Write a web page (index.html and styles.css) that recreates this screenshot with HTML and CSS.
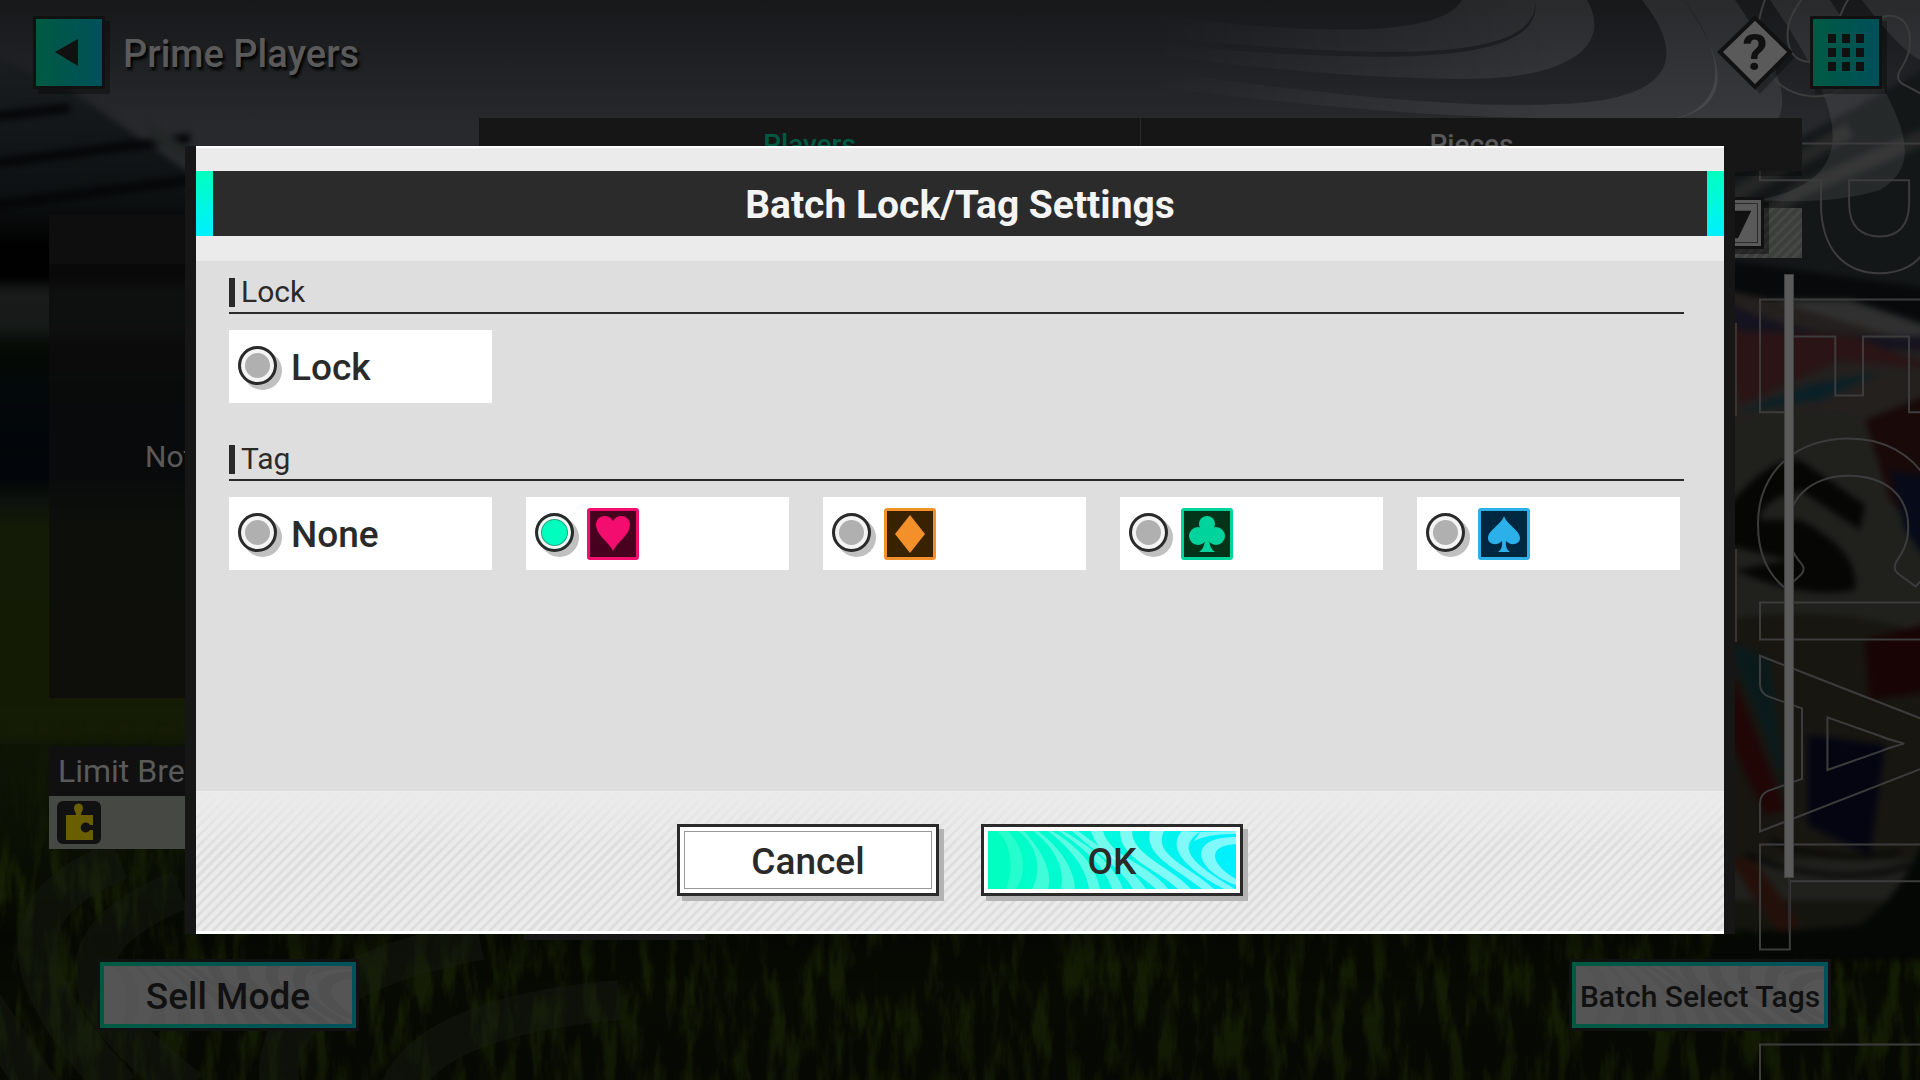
FILE: index.html
```html
<!DOCTYPE html>
<html lang="en">
<head>
<meta charset="UTF-8" />
<meta name="viewport" content="width=device-width, initial-scale=1" />
<title>Batch Lock/Tag Settings</title>
<link rel="stylesheet" href="styles.css">
</head>
<body>

<!-- stadium backdrop -->
<svg class="backdrop" viewBox="0 0 1920 1080" preserveAspectRatio="xMidYMid slice" aria-hidden="true">
  <defs>
    <linearGradient id="sky" x1="0" y1="0" x2="0" y2="1">
      <stop offset="0" stop-color="#16181a" />
      <stop offset="0.35" stop-color="#27292c" />
      <stop offset="0.75" stop-color="#2a2e30" />
      <stop offset="1" stop-color="#171b1b" />
    </linearGradient>
    <linearGradient id="stand" x1="0" y1="0" x2="0" y2="1">
      <stop offset="0" stop-color="#1a1e20" />
      <stop offset="0.22" stop-color="#0c1011" />
      <stop offset="0.28" stop-color="#010101" />
      <stop offset="0.33" stop-color="#010101" />
      <stop offset="0.35" stop-color="#181b1a" />
      <stop offset="0.4" stop-color="#161a18" />
      <stop offset="0.43" stop-color="#050a04" />
      <stop offset="0.5" stop-color="#03080b" />
      <stop offset="0.62" stop-color="#020509" />
      <stop offset="0.65" stop-color="#0b110c" />
      <stop offset="0.69" stop-color="#131a06" />
      <stop offset="1" stop-color="#151c05" />
    </linearGradient>
    <linearGradient id="pitch" x1="0" y1="0" x2="0" y2="1">
      <stop offset="0" stop-color="#0b0f08" />
      <stop offset="0.3" stop-color="#151c05" />
      <stop offset="0.6" stop-color="#0d1405" />
      <stop offset="0.78" stop-color="#070b03" />
      <stop offset="1" stop-color="#060903" />
    </linearGradient>
    <linearGradient id="swirlFade" gradientUnits="userSpaceOnUse" x1="1150" y1="0" x2="1550" y2="0">
      <stop offset="0" stop-color="#fff" stop-opacity="0" />
      <stop offset="1" stop-color="#fff" stop-opacity="0.08" />
    </linearGradient>
    <linearGradient id="grassFade" x1="0" y1="0" x2="0" y2="1">
      <stop offset="0" stop-color="#000" />
      <stop offset="0.5" stop-color="#fff" />
      <stop offset="1" stop-color="#aaa" />
    </linearGradient>
    <mask id="grassMask"><rect y="720" width="1920" height="360" fill="url(#grassFade)" /></mask>
    <filter id="grass" x="0" y="0" width="100%" height="100%" color-interpolation-filters="sRGB">
      <feTurbulence type="fractalNoise" baseFrequency="0.06 0.014" numOctaves="5" seed="7" />
      <feColorMatrix values="0 0 0 0 0.09  0 0 0 0 0.13  0 0 0 0 0.02  4 0 0 0 -1.8" />
    </filter>
    <filter id="soft" color-interpolation-filters="sRGB"><feGaussianBlur stdDeviation="3" /></filter>
    <filter id="softer" x="-20%" y="-100%" width="140%" height="300%" color-interpolation-filters="sRGB"><feGaussianBlur stdDeviation="12" /></filter>
  </defs>

  <rect width="1920" height="360" fill="url(#sky)" />
  <rect y="310" width="1920" height="770" fill="url(#pitch)" />
  <g filter="url(#soft)">
    <path d="M-20 50L70 90L200 180L260 240V740H-20Z" fill="url(#stand)" />
    <path d="M-20 118L70 108M-20 165L190 138M-20 207L190 180" stroke="#040607" stroke-width="9" />
    <path d="M145 120L190 148L185 160L150 140Z" fill="#232726" />
  </g>
  <g mask="url(#grassMask)">
    <rect y="720" width="1920" height="360" filter="url(#grass)" />
  </g>
  <rect x="-40" y="925" width="2000" height="30" fill="#030401" opacity="0.4" filter="url(#softer)" />

  <!-- ball and stand on the right -->
  <g filter="url(#soft)">
    <rect x="1725" y="170" width="230" height="760" fill="#15150f" />
    <path d="M1725 180L1940 60V300L1725 260Z" fill="#131718" />
    <path d="M1725 250L1800 190L1940 130M1725 200L1850 130" stroke="#252625" stroke-width="16" fill="none" />
    <path d="M1725 260L1940 290V330L1725 290Z" fill="#07090a" />
    <path d="M1725 290L1940 340V520H1725Z" fill="#23201e" />
    <path d="M1770 300L1940 350V330L1850 300Z" fill="#303030" />
    <path d="M1725 300Q1800 345 1940 335V350Q1820 350 1725 335Z" fill="#14131f" />
    <path d="M1725 330L1850 335L1940 370L1840 360L1740 405Z" fill="#2a1415" />
    <path d="M1738 412L1810 385L1880 372L1820 400Z" fill="#0a2027" />
    <path d="M1725 425Q1800 400 1860 420L1930 560V900H1725Z" fill="#20211d" />
    <path d="M1865 420L1940 390V560L1890 500Z" fill="#190909" />
    <path d="M1725 510Q1770 455 1800 460L1865 505L1860 530L1800 490Q1760 500 1760 520L1800 520Q1860 550 1855 590Q1800 600 1735 570L1790 560L1725 545Z" fill="#060705" />
    <path d="M1890 470L1940 480V580L1905 530Z" fill="#070a18" />
    <path d="M1725 620Q1840 600 1940 640V860H1725Z" fill="#171611" />
    <path d="M1735 680L1785 810L1765 815L1725 730Z" fill="#210606" />
    <path d="M1725 640L1770 660L1785 790L1760 720Z" fill="#0a1a1b" />
    <path d="M1865 640L1940 620V690L1870 700Z" fill="#180405" />
    <path d="M1808 735L1885 745L1870 855L1808 825Z" fill="#050512" />
    <path d="M1725 855L1755 860L1800 925L1780 935Z" fill="#24100a" />
    <path d="M1745 855Q1840 890 1910 865M1770 840Q1830 865 1900 852" stroke="#050605" stroke-width="4" fill="none" />
    <path d="M1860 925Q1910 890 1940 800V960H1700L1740 935Z" fill="#050704" />
  </g>

  <g fill="url(#swirlFade)">
    <path d="M1150 14C1300 34 1440 40 1462 0H1535C1540 60 1400 62 1150 36Z" />
    <path d="M1150 44C1400 66 1545 64 1535 0H1587C1615 50 1560 80 1460 79C1340 78 1240 66 1150 54Z" />
    <path d="M1150 70C1360 100 1480 108 1560 104C1670 100 1690 60 1642 0H1684C1740 80 1720 110 1670 120L1540 118C1400 116 1260 100 1150 86Z" />
    <path d="M1684 0H1735C1790 80 1790 110 1770 130L1720 140L1670 120C1725 108 1730 60 1684 0Z" />
    <path d="M1770 0H1830C1900 110 1930 160 1880 190Q1830 205 1760 200C1850 180 1860 130 1770 0Z" />
    <path d="M1862 0H1920V60Q1900 50 1862 0Z" />
  </g>
  <g fill="none" stroke="#1a2016" stroke-width="40" opacity="0.35">
    <path d="M120 860C20 900 0 960 120 1090" />
    <path d="M180 890C60 940 70 1000 190 1090" />
    <path d="M-20 1000L40 1090" />
    <path d="M280 1090C270 1020 330 970 480 940" />
    <path d="M400 1090C420 1040 500 1010 620 1000" />
  </g>

  <text class="side-word" transform="translate(1760 0) rotate(90)" x="-30 125 281 430 584 658 826 970 1026">SPECIAL P</text>

  <symbol id="waves" viewBox="0 0 248 58" preserveAspectRatio="none">
    <path opacity="0.3" d="M9 0C24 14 26 38 18 58H28C40 40 36 16 20 0Z" />
    <path opacity="0.5" d="M30 0C50 14 54 40 44 58H60C66 38 50 16 36 0Z" />
    <path opacity="0.6" d="M45 0C64 14 78 36 73 58H87C86 34 68 14 50 0Z" />
    <path opacity="0.7" d="M60 0C78 14 98 34 101 58H112C108 34 88 14 64 0Z" />
    <path opacity="0.75" d="M71 0C96 18 116 34 124 58H135C128 36 104 16 75 0Z" />
    <path opacity="0.8" d="M84 0C106 20 132 36 145 58H158C142 34 114 18 90 0Z" />
    <path opacity="0.9" d="M103 0C110 26 142 34 168 58H180C160 32 122 26 115 0Z" />
    <path d="M132 0C132 28 166 36 190 58H203C180 34 144 24 144 0Z" />
    <path d="M162 0C156 24 186 36 214 58H226C200 34 164 24 176 0Z" />
    <path d="M194 0C176 20 206 42 236 58H247C218 40 182 20 212 1Z" />
    <path d="M248 6C196 6 208 40 248 54V48C220 32 220 14 248 13Z" />
    <path d="M212 1L248 0V3Q222 2 206 10Z" />
  </symbol>
</svg>

<div class="screen">
  <header class="topbar">
    <button class="icon-btn" aria-label="Back">
      <svg viewBox="0 0 72 73"><path d="M22 36L45 23V50Z" /></svg>
    </button>
    <h1>Prime Players</h1>
    <button class="help-btn" aria-label="Help">
      <svg viewBox="0 0 74 73">
        <path class="help-shadow" d="M42 9L77 41L42 78L8 41Z" />
        <path class="help-shape" d="M37 2L72 36L37 71L2 36Z" />
      </svg>
      <span>?</span>
    </button>
    <button class="icon-btn" aria-label="Menu">
      <svg viewBox="0 0 72 73"><path d="M18 18h8v9h-8zM32 18h8v9h-8zM46 18h8v9h-8zM18 32h8v9h-8zM32 32h8v9h-8zM46 32h8v9h-8zM18 46h8v9h-8zM32 46h8v9h-8zM46 46h8v9h-8z" /></svg>
    </button>
  </header>

  <main class="content">
    <aside class="side">
      <div class="player-panel">
        <div class="player-head"></div>
        <p>Not</p>
      </div>
      <h2>Limit Break</h2>
      <div class="pieces-row">
        <svg viewBox="0 0 44 43">
          <rect width="44" height="43" rx="6" fill="#111" />
          <path d="M9 14H19C19 11 17 10 17 7A4 4 0 0 1 26 7C26 10 24 11 24 14H36V24H33A5 5 0 1 0 33 29H36V39H9Z" fill="#6a5f00" />
        </svg>
      </div>
    </aside>

    <section class="list-area">
      <nav class="tabs">
        <a class="active" href="#players">Players</a>
        <a href="#pieces">Pieces</a>
      </nav>
      <div class="filter-row">
        <button class="filter-btn" aria-label="Filter">
          <svg viewBox="0 0 40 40"><path d="M0 7H34L20 36H8Z" /></svg>
        </button>
      </div>
      <div class="list">
        <div class="players">
          <div class="player-card"></div>
          <div class="player-card"></div>
          <div class="list-foot"></div>
        </div>
        <div class="scroll"><div class="thumb"></div></div>
      </div>
    </section>
  </main>

  <footer class="bottombar">
    <button class="mode-btn"><svg class="waves"><use href="#waves" /></svg><span>Sell Mode</span></button>
    <button class="mode-btn narrow"><svg class="waves"><use href="#waves" /></svg><span>Batch Select Tags</span></button>
  </footer>
</div>

<form class="dialog" role="dialog" aria-labelledby="dialogTitle">
  <h2 class="dialog-title" id="dialogTitle">Batch Lock/Tag Settings</h2>

  <div class="dialog-body">
    <section class="group">
      <h3>Lock</h3>
      <div class="options">
        <label class="option"><input type="radio" name="lock" value="lock" /><span>Lock</span></label>
      </div>
    </section>

    <section class="group">
      <h3>Tag</h3>
      <div class="options">
        <label class="option"><input type="radio" name="tag" value="none" /><span>None</span></label>
        <label class="option">
          <input type="radio" name="tag" value="heart" aria-label="Heart" checked />
          <svg class="tag heart" viewBox="3 3 46 46"><path d="M26 43C22 34 9 27 9 17C9 7 22 5 26 13C30 5 43 7 43 17C43 27 30 34 26 43Z" /></svg>
        </label>
        <label class="option">
          <input type="radio" name="tag" value="diamond" aria-label="Diamond" />
          <svg class="tag diamond" viewBox="3 3 46 46"><path d="M26 7L41 26L26 45L11 26Z" /></svg>
        </label>
        <label class="option">
          <input type="radio" name="tag" value="club" aria-label="Club" />
          <svg class="tag club" viewBox="3 3 46 46">
            <circle cx="26" cy="16" r="8" /><circle cx="17" cy="28" r="9" /><circle cx="35" cy="28" r="9" />
            <path d="M22 20H30L28 30Q28 40 34 44H18Q24 40 24 30Z" />
          </svg>
        </label>
        <label class="option">
          <input type="radio" name="tag" value="spade" aria-label="Spade" />
          <svg class="tag spade" viewBox="3 3 46 46"><path d="M26 8C29 17 42 22 42 30C42 37 32 38 28 33Q27 41 32 44H20Q25 41 24 33C20 38 10 37 10 30C10 22 23 17 26 8Z" /></svg>
        </label>
      </div>
    </section>
  </div>

  <div class="dialog-actions">
    <button type="button" class="btn"><span>Cancel</span></button>
    <button type="submit" class="btn btn-ok"><svg class="waves"><use href="#waves" /></svg><span>OK</span></button>
  </div>
</form>

</body>
</html>
```
FILE: styles.css
```css
* {
  box-sizing: border-box;
}
body {
  margin: 0;
  position: relative;
  min-height: 100vh;
  overflow-x: hidden;
  background: #0a0d08;
  color: #2a2a2a;
  font-family: Roboto, "Liberation Sans", sans-serif;
}
h1, h2, h3, p {
  margin: 0;
  font-weight: 500;
}
button {
  font-family: inherit;
  padding: 0;
  cursor: pointer;
}
.backdrop {
  position: absolute;
  inset: 0;
  width: 100%;
  height: 100%;
}
.side-word {
  font-family: Lato, sans-serif;
  font-size: 244px;
  font-weight: 900;
  fill: none;
  stroke: #3c3c3c;
  stroke-width: 2px;
}

/* page behind the dialog */
.screen {
  position: relative;
  min-height: 100vh;
  display: flex;
  flex-direction: column;
}
.topbar {
  display: flex;
  align-items: center;
  gap: 18px;
  padding: 16px 38px 0 33px;
}
.topbar h1 {
  flex: 1;
  padding-top: 3px;
  color: #5a5a5a;
  font-size: 38px;
  line-height: 48px;
  text-shadow: 2px 3px 3px #000;
}
.icon-btn {
  width: 72px;
  height: 73px;
  border: 3px solid #111;
  background: linear-gradient(90deg, #005a42, #00505a);
  box-shadow: 5px 5px 0 rgba(0,0,0,0.3);
}
.icon-btn svg {
  display: block;
  margin: -3px;
  width: 72px;
  height: 73px;
  fill: #111;
}
.help-btn {
  position: relative;
  width: 74px;
  height: 73px;
  border: none;
  background: none;
  color: #111;
  font-size: 50px;
  font-weight: 700;
}
.help-btn svg {
  position: absolute;
  inset: 0;
  overflow: visible;
}
.help-btn span {
  position: relative;
}
.help-shape {
  fill: #5a5a5a;
  stroke: #111;
  stroke-width: 4px;
}
.help-shadow {
  fill: rgba(0,0,0,0.3);
}
.content {
  display: grid;
  grid-template-columns: 430px 1fr;
  padding: 29px 118px 0 49px;
}
.side {
  margin: 97px 30px 0 0;
}
.player-panel {
  height: 483px;
  background: rgba(12,12,12,0.75);
}
.player-head {
  height: 49px;
  background: #0e0e0e;
}
.player-panel p {
  padding: 173px 0 0 96px;
  color: #5a5a5a;
  font-size: 30px;
  font-weight: 400;
  line-height: 40px;
}
.side h2 {
  margin-top: 48px;
  padding-left: 9px;
  background: #101010;
  color: #5a5a5a;
  font-size: 32px;
  font-weight: 400;
  line-height: 50px;
}
.pieces-row {
  padding: 5px 8px;
  background: #464844;
}
.pieces-row svg {
  display: block;
  width: 44px;
  height: 43px;
}
.tabs {
  display: flex;
  background: #161616;
  box-shadow: 0 5px 0 rgba(0,0,0,0.3);
}
.tabs a {
  flex: 1;
  color: #5a5a5a;
  font-size: 28px;
  font-weight: 500;
  line-height: 53px;
  text-align: center;
  text-decoration: none;
}
.tabs a + a {
  border-left: 1px solid #2a2a2a;
}
.tabs .active {
  color: #005a42;
}
.filter-row {
  display: flex;
  justify-content: flex-end;
  align-items: flex-start;
  height: 50px;
  margin-top: 37px;
  padding-right: 38px;
  background: repeating-linear-gradient(135deg, #3c3e3c 0 4px, #464846 4px 7px);
}
.filter-btn {
  width: 52px;
  height: 52px;
  margin-top: -11px;
  border: 3px solid #111;
  background: #5a5a5a;
  box-shadow: 5px 5px 0 rgba(0,0,0,0.4);
}
.filter-btn svg {
  display: block;
  margin: 3px;
  width: 40px;
  height: 40px;
  border: 1px solid #2a2a2a;
  fill: #111;
}
.list {
  display: flex;
  justify-content: space-between;
  padding: 16px 8px 0 45px;
}
.players {
  flex: 1;
  margin-right: 47px;
  padding-top: 49px;
}
.player-card {
  height: 93px;
  margin-bottom: 133px;
  border: 2px solid #3c332d;
}
.list-foot {
  width: 181px;
  height: 165px;
  background: #161616;
}
.scroll {
  width: 10px;
  background: linear-gradient(#2a2a2a, #2a2a2a) 50% 0 / 2px 658px no-repeat;
}
.thumb {
  height: 604px;
  border: 1px solid #404040;
  background: #5a5a5a;
}
.bottombar {
  display: flex;
  justify-content: space-between;
  margin-top: auto;
  padding: 16px 89px 49px 97px;
}
.mode-btn {
  position: relative;
  width: 262px;
  height: 72px;
  border: 3px solid #111;
  background: linear-gradient(90deg, #005a42, #00525a);
  color: #111;
  font-size: 37px;
  font-weight: 500;
}
.mode-btn span,
.btn span {
  position: relative;
  display: block;
  padding-top: 3px;
}
.mode-btn.narrow {
  font-size: 30px;
}
.mode-btn .waves {
  background: #555;
  fill: rgba(0,0,0,0.06);
}
.waves {
  position: absolute;
  top: 4px;
  left: 4px;
  width: calc(100% - 8px);
  height: calc(100% - 8px);
}

/* dialog */
.dialog {
  position: absolute;
  top: 146px;
  left: 196px;
  right: 196px;
  border-top: 2px solid #fff;
  border-bottom: 3px solid #fff;
  background: #ebebeb;
  box-shadow: -11px 0 0 #161616, 11px 0 0 #161616;
}
.dialog-title {
  margin: 23px 0 25px;
  padding-top: 3px;
  background:
    linear-gradient(#00ffbf, #00f0ff) left / 17px 100% no-repeat,
    linear-gradient(#00ffbf, #00f0ff) right / 17px 100% no-repeat,
    #2b2b2b;
  color: #f4f4f4;
  font-size: 39px;
  font-weight: 700;
  line-height: 62px;
  text-align: center;
}
.dialog-body {
  min-height: 530px;
  padding: 17px 40px 24px 33px;
  background: #dedede;
}
.group {
  margin-bottom: 42px;
}
.group h3 {
  padding-bottom: 5px;
  border-bottom: 2px solid #2a2a2a;
  font-size: 30px;
  font-weight: 400;
  line-height: 28px;
}
.group h3::before {
  content: "";
  display: inline-block;
  width: 6px;
  height: 29px;
  margin-right: 6px;
  background: #2a2a2a;
  vertical-align: top;
}
.options {
  display: grid;
  grid-template-columns: repeat(5, 1fr);
  gap: 34px;
  margin-top: 16px;
  padding-right: 4px;
}
.option {
  display: flex;
  align-items: center;
  height: 73px;
  padding: 0 9px 2px;
  background: #fff;
  font-size: 37px;
  font-weight: 500;
  cursor: pointer;
}
.option input {
  appearance: none;
  width: 39px;
  height: 39px;
  margin: 0;
  border: 3px solid #2a2a2a;
  border-radius: 50%;
  background: #b0b0b0;
  box-shadow: inset 0 0 0 4px #f4f4f4, 5px 5px 0 #c0c0c0;
}
.option input:checked {
  background: #00ffbf;
  box-shadow: inset 0 0 0 3px #f4f4f4, inset 0 0 0 4px #1fa582, 5px 5px 0 #c0c0c0;
}
.option span {
  margin-left: 14px;
  padding-top: 4px;
}
.tag {
  width: 52px;
  height: 52px;
  margin: 2px 0 0 13px;
  border: 3px solid;
  border-radius: 3px;
  fill: currentColor;
}
.heart { color: #f20d6e; background: #47001d; }
.diamond { color: #f4902a; background: #382200; }
.club { color: #00d49c; background: #003318; }
.spade { color: #2bb0ea; background: #002740; }
.dialog-actions {
  display: flex;
  justify-content: center;
  gap: 42px;
  padding: 33px 0 35px;
  background:
    linear-gradient(#ebebeb, rgba(235,235,235,0) 60px),
    repeating-linear-gradient(135deg, #ebebeb 0 4px, #dedede 4px 7px);
}
.btn {
  position: relative;
  width: 262px;
  height: 72px;
  border: 3px solid #2a2a2a;
  background: #fff;
  box-shadow: 5px 5px 0 #b3b3b3;
  color: #2a2a2a;
  font-size: 37px;
  font-weight: 500;
}
.btn::before {
  content: "";
  position: absolute;
  inset: 4px;
  border: 1px solid #999;
}
.btn-ok .waves {
  background: linear-gradient(90deg, #00ffbf, #00f0ff);
  fill: rgba(255,255,255,0.5);
}
```
